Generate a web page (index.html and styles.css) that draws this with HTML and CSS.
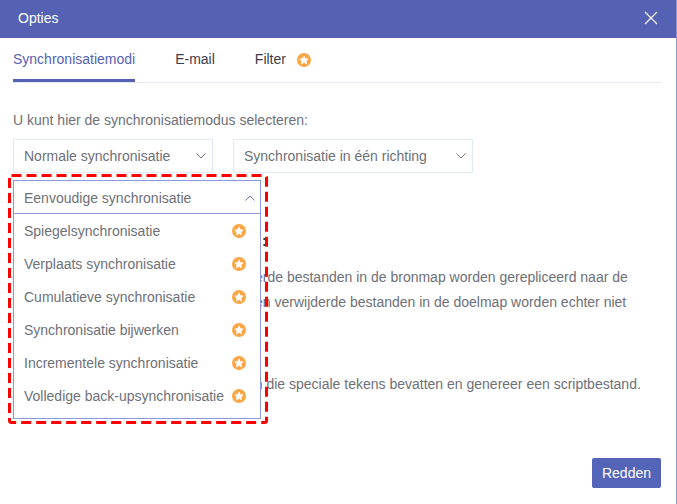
FILE: index.html
```html
<!DOCTYPE html>
<html lang="nl">
<head>
<meta charset="utf-8">
<title>Opties</title>
<link rel="stylesheet" href="styles.css">
</head>
<body>
<div class="dialog">
  <header class="titlebar">
    <span class="title">Opties</span>
    <svg class="close" width="14" height="14" viewBox="0 0 14 14"><path d="M1 1 13 13M13 1 1 13" fill="none" stroke="#fff" stroke-width="1.1"/></svg>
  </header>
  <div class="content">
    <nav class="tabs">
      <span class="tab active">Synchronisatiemodi</span>
      <span class="tab">E-mail</span>
      <span class="tab">Filter <svg class="star tab-star" width="14" height="14" viewBox="0 0 14 14"><circle cx="7" cy="7" r="7" fill="#fba645"/><path d="M7 2.2 8.5 5.3 11.8 5.8 9.4 8.1 10 11.4 7 9.8 4 11.4 4.6 8.1 2.2 5.8 5.5 5.3Z" fill="#fff"/></svg></span>
    </nav>
    <p class="intro">U kunt hier de synchronisatiemodus selecteren:</p>
    <div class="selects">
      <div class="select first"><span>Normale synchronisatie</span><svg width="10" height="6" viewBox="0 0 10 6"><path d="M.5 .5 5 5 9.5 .5" fill="none" stroke="#777" stroke-width="1"/></svg></div>
      <div class="select second"><span>Synchronisatie in één richting</span><svg width="10" height="6" viewBox="0 0 10 6"><path d="M.5 .5 5 5 9.5 .5" fill="none" stroke="#777" stroke-width="1"/></svg></div>
    </div>
    <div class="heading">:</div>
    <p class="para para-main"><span class="line line-a">erde bestanden in de bronmap worden gerepliceerd naar de</span><span class="line line-b">en verwijderde bestanden in de doelmap worden echter niet</span></p>
    <p class="para para-script"><span class="line line-c">en die speciale tekens bevatten en genereer een scriptbestand.</span></p>
    <div class="footer"><button class="save">Redden</button></div>
  </div>

  <div class="dropdown">
    <div class="drop-head"><span>Eenvoudige synchronisatie</span><svg width="10" height="6" viewBox="0 0 10 6"><path d="M.5 5.5 5 1 9.5 5.5" fill="none" stroke="#6d78c9" stroke-width="1"/></svg></div>
    <ul class="drop-list">
      <li><span>Spiegelsynchronisatie</span><svg class="star" width="14" height="14" viewBox="0 0 14 14"><circle cx="7" cy="7" r="7" fill="#fba645"/><path d="M7 2.2 8.5 5.3 11.8 5.8 9.4 8.1 10 11.4 7 9.8 4 11.4 4.6 8.1 2.2 5.8 5.5 5.3Z" fill="#fff"/></svg></li>
      <li><span>Verplaats synchronisatie</span><svg class="star" width="14" height="14" viewBox="0 0 14 14"><circle cx="7" cy="7" r="7" fill="#fba645"/><path d="M7 2.2 8.5 5.3 11.8 5.8 9.4 8.1 10 11.4 7 9.8 4 11.4 4.6 8.1 2.2 5.8 5.5 5.3Z" fill="#fff"/></svg></li>
      <li><span>Cumulatieve synchronisatie</span><svg class="star" width="14" height="14" viewBox="0 0 14 14"><circle cx="7" cy="7" r="7" fill="#fba645"/><path d="M7 2.2 8.5 5.3 11.8 5.8 9.4 8.1 10 11.4 7 9.8 4 11.4 4.6 8.1 2.2 5.8 5.5 5.3Z" fill="#fff"/></svg></li>
      <li><span>Synchronisatie bijwerken</span><svg class="star" width="14" height="14" viewBox="0 0 14 14"><circle cx="7" cy="7" r="7" fill="#fba645"/><path d="M7 2.2 8.5 5.3 11.8 5.8 9.4 8.1 10 11.4 7 9.8 4 11.4 4.6 8.1 2.2 5.8 5.5 5.3Z" fill="#fff"/></svg></li>
      <li><span>Incrementele synchronisatie</span><svg class="star" width="14" height="14" viewBox="0 0 14 14"><circle cx="7" cy="7" r="7" fill="#fba645"/><path d="M7 2.2 8.5 5.3 11.8 5.8 9.4 8.1 10 11.4 7 9.8 4 11.4 4.6 8.1 2.2 5.8 5.5 5.3Z" fill="#fff"/></svg></li>
      <li><span>Volledige back-upsynchronisatie</span><svg class="star" width="14" height="14" viewBox="0 0 14 14"><circle cx="7" cy="7" r="7" fill="#fba645"/><path d="M7 2.2 8.5 5.3 11.8 5.8 9.4 8.1 10 11.4 7 9.8 4 11.4 4.6 8.1 2.2 5.8 5.5 5.3Z" fill="#fff"/></svg></li>
    </ul>
  </div>

  <svg class="annotation" width="260" height="250" viewBox="0 0 260 250"><rect x="1.5" y="1.5" width="257" height="247" rx="2" fill="none" stroke="#f00" stroke-width="3" stroke-dasharray="10 5"/></svg>
</div>
</body>
</html>
```

FILE: styles.css
```css
* { box-sizing: border-box; }
html, body { margin: 0; padding: 0; background: #fff; }
body { font-family: "Liberation Sans", Arial, sans-serif; font-size: 14px; color: #6e7078; }

.dialog {
  position: relative;
  width: 677px;
  height: 504px;
  display: flex;
  flex-direction: column;
  overflow: hidden;
  border-right: 1px solid #8f96d8;
}

.titlebar {
  flex: none;
  height: 38px;
  margin-right: -1px;
  padding: 0 19px 2px 18px;
  display: flex;
  align-items: center;
  justify-content: space-between;
  background: #5562b3;
  color: #fff;
}
.title { font-size: 14px; }
.close { display: block; }

.content {
  flex: 1;
  display: flex;
  flex-direction: column;
  padding: 0 15px 16px 13px;
}

.tabs {
  flex: none;
  height: 45px;
  display: flex;
  gap: 40px;
  border-bottom: 1px solid #e6e8f3;
}
.tab {
  display: flex;
  align-items: center;
  gap: 11px;
  height: 44px;
  padding-bottom: 3px;
  color: #3b3d4a;
}
.tab.active { color: #5562b3; border-bottom: 3px solid #5562b3; padding-bottom: 0; }
.tab-star { flex: none; margin-top: 2px; }

.intro { margin: 29px 0 0; line-height: 16px; }

.selects { display: flex; gap: 20px; margin-top: 11px; }
.select {
  height: 34px;
  display: flex;
  align-items: center;
  justify-content: space-between;
  padding: 0 6px 0 10px;
  border: 1px solid #e2e9f6;
}
.select.first { width: 200px; }
.select.second { width: 240px; }

.heading {
  margin: 58px 0 0;
  padding-left: 249px;
  color: #33353f;
  font-weight: 700;
  line-height: 20px;
}
.para { margin: 0; line-height: 25px; white-space: nowrap; }
.para-main { margin-top: 14px; }
.para-script { margin-top: 57px; }
.line { display: block; }
.line-a { padding-left: 242px; }
.line-b { padding-left: 242px; }
.line-c { padding-left: 234px; }

.footer { margin-top: auto; display: flex; justify-content: flex-end; }
.save {
  width: 69px;
  height: 30px;
  padding: 0;
  border: 0;
  border-radius: 2px;
  background: #5465b9;
  color: #fff;
  font: 14px "Liberation Sans", Arial, sans-serif;
}

.dropdown {
  position: absolute;
  left: 13px;
  top: 180px;
  width: 248px;
  height: 239px;
  background: #fff;
  border: 1px solid #8e98e0;
}
.drop-head {
  height: 33px;
  display: flex;
  align-items: center;
  justify-content: space-between;
  padding: 1px 5px 0 10px;
  border-bottom: 1px solid #8e98e0;
}
.drop-list { list-style: none; margin: 0; padding: 0; }
.drop-list li {
  height: 33px;
  display: flex;
  align-items: center;
  justify-content: space-between;
  padding: 0 14px 0 10px;
}
.star { display: block; }

.annotation { position: absolute; left: 8px; top: 174px; }
```
